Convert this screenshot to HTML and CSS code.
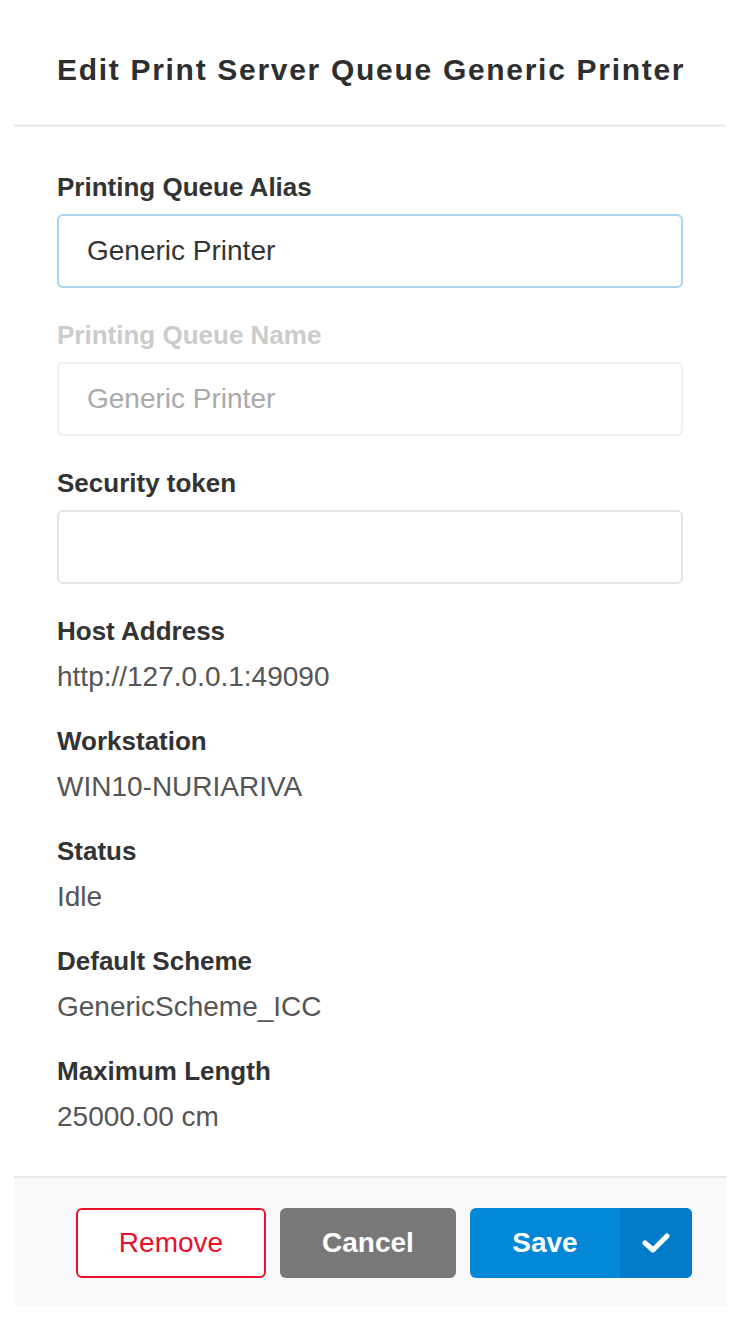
FILE: index.html
```html
<!DOCTYPE html>
<html lang="en">
<head>
<meta charset="utf-8">
<title>Edit Print Server Queue</title>
<link rel="stylesheet" href="styles.css">
</head>
<body>
<div class="modal">
  <div class="modal-header">
    <h1 class="modal-title">Edit Print Server Queue Generic Printer</h1>
  </div>
  <div class="modal-body">
    <div class="form-group">
      <label class="label">Printing Queue Alias</label>
      <input class="input input-focus" type="text" value="Generic Printer">
    </div>
    <div class="form-group">
      <label class="label label-disabled">Printing Queue Name</label>
      <input class="input input-disabled" type="text" value="Generic Printer" disabled>
    </div>
    <div class="form-group">
      <label class="label">Security token</label>
      <input class="input" type="text" value="">
    </div>
    <div class="info">
      <div class="info-item">
        <div class="label">Host Address</div>
        <div class="value">http://127.0.0.1:49090</div>
      </div>
      <div class="info-item">
        <div class="label">Workstation</div>
        <div class="value">WIN10-NURIARIVA</div>
      </div>
      <div class="info-item">
        <div class="label">Status</div>
        <div class="value">Idle</div>
      </div>
      <div class="info-item">
        <div class="label">Default Scheme</div>
        <div class="value">GenericScheme_ICC</div>
      </div>
      <div class="info-item">
        <div class="label">Maximum Length</div>
        <div class="value">25000.00 cm</div>
      </div>
    </div>
  </div>
  <div class="modal-footer">
    <button class="btn btn-remove" type="button">Remove</button>
    <button class="btn btn-cancel" type="button">Cancel</button>
    <button class="btn btn-save" type="button">
      <span class="save-text">Save</span>
      <span class="save-icon">
        <svg width="28" height="22" viewBox="0 0 28 22" aria-hidden="true">
          <polyline points="3,11 11,18 25,4" fill="none" stroke="#ffffff" stroke-width="5" stroke-linecap="round" stroke-linejoin="round"/>
        </svg>
      </span>
    </button>
  </div>
</div>
</body>
</html>
```

FILE: styles.css
```css
* {
  box-sizing: border-box;
}

html, body {
  margin: 0;
  padding: 0;
  background: #ffffff;
}

body {
  font-family: "Liberation Sans", Arial, sans-serif;
  color: #333333;
}

.modal {
  margin: 0 16px 0 14px;
}

.modal-header {
  padding: 50px 43px 34px;
  border-bottom: 3px solid #eeeeee;
}

.modal-title {
  margin: 0;
  font-size: 30px;
  line-height: 40px;
  font-weight: 700;
  letter-spacing: 1.7px;
  color: #2e2e2e;
  white-space: nowrap;
}

.modal-body {
  padding: 42px 43px 41px;
}

.form-group {
  display: flex;
  flex-direction: column;
  margin-bottom: 29px;
}

.label {
  display: block;
  font-size: 26px;
  line-height: 36px;
  font-weight: 700;
  color: #333333;
}

.form-group .label {
  margin-bottom: 9px;
}

.label-disabled {
  color: #cccccc;
}

.input {
  display: block;
  width: 100%;
  height: 74px;
  padding: 0 28px;
  border: 2px solid #e4e4e4;
  border-radius: 6px;
  background: #ffffff;
  font-family: "Liberation Sans", Arial, sans-serif;
  font-size: 28px;
  color: #333333;
  outline: none;
}

.input-focus {
  border-color: #a9d4ee;
}

.input-disabled {
  border-color: #efefef;
  color: #aaaaaa;
  -webkit-text-fill-color: #aaaaaa;
}

.info {
  display: flex;
  flex-direction: column;
  gap: 28px;
}

.info-item .label {
  margin-bottom: 10px;
}

.value {
  font-size: 28px;
  line-height: 36px;
  color: #555555;
}

.modal-footer {
  display: flex;
  justify-content: flex-end;
  gap: 14px;
  padding: 30px 34px 28px;
  border-top: 2px solid #e8e8e8;
  background: #f8f9fb;
}

.btn {
  height: 70px;
  border-radius: 6px;
  font-family: "Liberation Sans", Arial, sans-serif;
  font-size: 28px;
  padding: 0;
  cursor: pointer;
}

.btn-remove {
  width: 190px;
  background: #ffffff;
  border: 2px solid #e8102a;
  color: #e8102a;
  font-weight: 400;
}

.btn-cancel {
  width: 176px;
  background: #787878;
  border: none;
  color: #ffffff;
  font-weight: 700;
}

.btn-save {
  width: 222px;
  display: flex;
  align-items: stretch;
  background: #0388d8;
  border: none;
  color: #ffffff;
  font-weight: 700;
  overflow: hidden;
}

.save-text {
  flex: 1;
  display: flex;
  align-items: center;
  justify-content: center;
}

.save-icon {
  width: 72px;
  display: flex;
  align-items: center;
  justify-content: center;
  background: #027cc8;
}
```
